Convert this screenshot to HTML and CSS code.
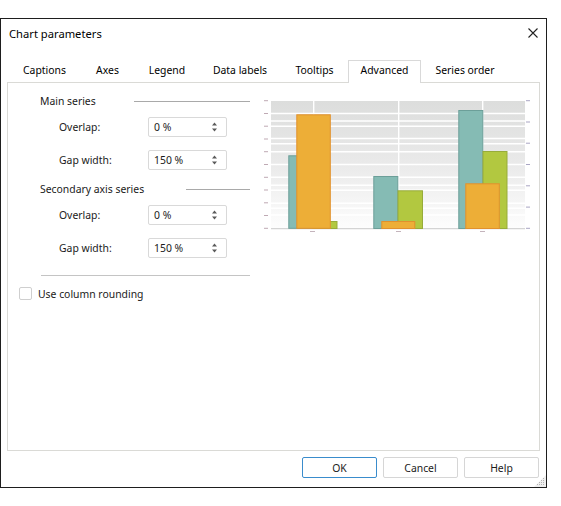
FILE: index.html
```html
<!DOCTYPE html>
<html>
<head>
<meta charset="utf-8">
<title>Chart parameters</title>
<link rel="stylesheet" href="styles.css">
</head>
<body>
<div class="dialog">
  <div class="titlebar">
    <span class="title">Chart parameters</span>
    <svg class="close" width="10" height="10" viewBox="0 0 10 10"><path d="M0.5 0.5L9.5 9.5M9.5 0.5L0.5 9.5" stroke="#222" stroke-width="1.1" fill="none"/></svg>
  </div>
  <div class="tabs">
    <div class="tab t-captions">Captions</div>
    <div class="tab t-axes">Axes</div>
    <div class="tab t-legend">Legend</div>
    <div class="tab t-labels">Data labels</div>
    <div class="tab t-tooltips">Tooltips</div>
    <div class="tab t-advanced active">Advanced</div>
    <div class="tab t-order">Series order</div>
  </div>
  <div class="panel">
    <div class="left">
      <div class="group-head"><span>Main series</span><span class="rule rule-main"></span></div>
      <div class="field first">
        <span class="label">Overlap:</span>
        <div class="spin"><span>0 %</span><svg width="5" height="10" viewBox="0 0 5 10"><path d="M0 3.5L2.5 0.5L5 3.5Z M0 6.5L5 6.5L2.5 9.5Z" fill="#5a5a5a"/></svg></div>
      </div>
      <div class="field">
        <span class="label">Gap width:</span>
        <div class="spin"><span>150 %</span><svg width="5" height="10" viewBox="0 0 5 10"><path d="M0 3.5L2.5 0.5L5 3.5Z M0 6.5L5 6.5L2.5 9.5Z" fill="#5a5a5a"/></svg></div>
      </div>
      <div class="group-head second"><span>Secondary axis series</span><span class="rule rule-sec"></span></div>
      <div class="field first">
        <span class="label">Overlap:</span>
        <div class="spin"><span>0 %</span><svg width="5" height="10" viewBox="0 0 5 10"><path d="M0 3.5L2.5 0.5L5 3.5Z M0 6.5L5 6.5L2.5 9.5Z" fill="#5a5a5a"/></svg></div>
      </div>
      <div class="field">
        <span class="label">Gap width:</span>
        <div class="spin"><span>150 %</span><svg width="5" height="10" viewBox="0 0 5 10"><path d="M0 3.5L2.5 0.5L5 3.5Z M0 6.5L5 6.5L2.5 9.5Z" fill="#5a5a5a"/></svg></div>
      </div>
      <div class="sep"></div>
      <label class="check"><span class="box"></span><span>Use column rounding</span></label>
    </div>
    <svg class="chart" width="272" height="142" viewBox="0 0 272 142">
      <defs>
        <linearGradient id="bg" x1="0" y1="0" x2="0" y2="1">
          <stop offset="0" stop-color="#dcdddc"/>
          <stop offset="0.5" stop-color="#eaeaea"/>
          <stop offset="1" stop-color="#fdfdfd"/>
        </linearGradient>
      </defs>
      <rect x="9" y="6" width="254" height="127" fill="url(#bg)"/>
      <g stroke="#ffffff" stroke-width="1.4">
        <line x1="9" y1="18.5" x2="263" y2="18.5"/>
        <line x1="9" y1="26" x2="263" y2="26"/>
        <line x1="9" y1="31.3" x2="263" y2="31.3"/>
        <line x1="9" y1="43.5" x2="263" y2="43.5"/>
        <line x1="9" y1="48.7" x2="263" y2="48.7"/>
        <line x1="9" y1="56.7" x2="263" y2="56.7"/>
        <line x1="9" y1="69.5" x2="263" y2="69.5"/>
        <line x1="9" y1="82.3" x2="263" y2="82.3"/>
        <line x1="9" y1="90.3" x2="263" y2="90.3"/>
        <line x1="9" y1="95.3" x2="263" y2="95.3"/>
        <line x1="9" y1="108.3" x2="263" y2="108.3"/>
        <line x1="9" y1="113.3" x2="263" y2="113.3"/>
        <line x1="9" y1="120" x2="263" y2="120"/>
        <line x1="51.7" y1="6" x2="51.7" y2="133"/>
        <line x1="136.7" y1="6" x2="136.7" y2="133"/>
        <line x1="220.7" y1="6" x2="220.7" y2="133"/>
      </g>
      <line x1="9" y1="133.6" x2="263" y2="133.6" stroke="#d4d4d4" stroke-width="1.4"/>
      <g fill="#85bbb4" stroke="#6c9f99" stroke-width="1">
        <rect x="26.8" y="60.8" width="24" height="72.5"/>
        <rect x="111.8" y="81.5" width="24" height="52"/>
        <rect x="196.8" y="15.5" width="24" height="118"/>
      </g>
      <g fill="#b2c840" stroke="#97ac3a" stroke-width="1">
        <rect x="51" y="126.5" width="24" height="7"/>
        <rect x="136" y="95.8" width="24.5" height="37.7"/>
        <rect x="221" y="56.5" width="24" height="77"/>
      </g>
      <g fill="#edae37" stroke="#e1912d" stroke-width="1">
        <rect x="34.8" y="19.8" width="33.5" height="113.5"/>
        <rect x="119.8" y="126.5" width="33" height="7"/>
        <rect x="203.8" y="88.8" width="33.5" height="44.7"/>
      </g>
      <g fill="#bfaab4">
        <rect x="2" y="5.2" width="4" height="1"/>
        <rect x="2" y="18" width="4" height="1"/>
        <rect x="2" y="30.7" width="4" height="1"/>
        <rect x="2" y="43.5" width="4" height="1"/>
        <rect x="2" y="56.2" width="4" height="1"/>
        <rect x="2" y="69" width="4" height="1"/>
        <rect x="2" y="81.8" width="4" height="1"/>
        <rect x="2" y="94.5" width="4" height="1"/>
        <rect x="2" y="107.3" width="4" height="1"/>
        <rect x="2" y="120" width="4" height="1"/>
        <rect x="2" y="132.8" width="4" height="1"/>
      </g>
      <g fill="#aaa6c4">
        <rect x="264" y="5.2" width="4" height="1"/>
        <rect x="264" y="26.5" width="4" height="1"/>
        <rect x="264" y="47.7" width="4" height="1"/>
        <rect x="264" y="69" width="4" height="1"/>
        <rect x="264" y="90.3" width="4" height="1"/>
        <rect x="264" y="111.6" width="4" height="1"/>
        <rect x="264" y="132.8" width="4" height="1"/>
      </g>
      <g fill="#c4b4bc">
        <rect x="48" y="136" width="5" height="1"/>
        <rect x="134" y="136" width="5" height="1"/>
        <rect x="218" y="136" width="5" height="1"/>
      </g>
    </svg>
  </div>
  <div class="buttons">
    <button class="btn default">OK</button>
    <button class="btn">Cancel</button>
    <button class="btn">Help</button>
  </div>
  <svg class="grip" width="12" height="12" viewBox="0 0 12 12">
    <path d="M12 0L12 12L0 12Z" fill="#efefef"/>
    <g fill="#b4b4b4">
      <rect x="9" y="3" width="1" height="1"/>
      <rect x="7" y="5" width="1" height="1"/><rect x="9" y="5" width="1" height="1"/>
      <rect x="5" y="7" width="1" height="1"/><rect x="7" y="7" width="1" height="1"/><rect x="9" y="7" width="1" height="1"/>
      <rect x="3" y="9" width="1" height="1"/><rect x="5" y="9" width="1" height="1"/><rect x="7" y="9" width="1" height="1"/><rect x="9" y="9" width="1" height="1"/>
    </g>
  </svg>
</div>
</body>
</html>
```
FILE: styles.css
```css
html, body {
  margin: 0;
  padding: 0;
  background: #ffffff;
}
body {
  font-family: "Noto Sans", "Open Sans", sans-serif;
  font-size: 10.4px;
  color: #1a1a1a;
}
.dialog {
  position: relative;
  box-sizing: border-box;
  margin-top: 18px;
  width: 547px;
  height: 470px;
  border: 1px solid #1e1e1e;
  background: #ffffff;
  display: flex;
  flex-direction: column;
}
.titlebar {
  height: 30px;
  display: flex;
  justify-content: space-between;
  align-items: flex-start;
  padding-left: 8px;
}
.title {
  font-size: 11.2px;
  line-height: 30px;
  color: #000;
}
.close {
  margin-top: 9px;
  margin-right: 8px;
}
.tabs {
  display: flex;
  margin-top: 11px;
  padding-left: 8px;
  height: 22px;
}
.tab {
  box-sizing: border-box;
  height: 22px;
  line-height: 18px;
  text-align: center;
  border: 1px solid transparent;
  border-bottom: 0;
  color: #000;
  white-space: nowrap;
}
.tab.active {
  position: relative;
  z-index: 1;
  height: 23px;
  margin-bottom: -1px;
  border-color: #d9d9d9;
  background: #ffffff;
}
.t-captions { width: 71px; }
.t-axes { width: 55px; }
.t-legend { width: 64px; }
.t-labels { width: 82px; }
.t-tooltips { width: 67px; }
.t-advanced { width: 73px; }
.t-order { width: 88px; }
.panel {
  box-sizing: border-box;
  margin: 0 6px 0 6px;
  height: 369px;
  border: 1px solid #dadad6;
  display: flex;
  align-items: flex-start;
}
.left {
  width: 243px;
  padding-top: 10px;
  display: flex;
  flex-direction: column;
}
.group-head {
  height: 16px;
  line-height: 16px;
  padding-left: 32px;
  display: flex;
  align-items: center;
}
.group-head.second {
  margin-top: 11px;
}
.rule {
  flex: 1;
  height: 1px;
  background: #a9a9a9;
  margin-right: 1px;
}
.rule-main { margin-left: 38px; }
.rule-sec { margin-left: 42px; }
.field {
  display: flex;
  align-items: center;
  padding-left: 51px;
  height: 20px;
  margin-top: 13px;
}
.field.first {
  margin-top: 8px;
}
.label {
  width: 89px;
}
.spin {
  box-sizing: border-box;
  width: 79px;
  height: 20px;
  border: 1px solid #d9d9d9;
  border-radius: 2px;
  display: flex;
  align-items: center;
  justify-content: space-between;
  padding-left: 5px;
  padding-right: 9px;
}
.spin svg {
  display: block;
}
.sep {
  height: 1px;
  background: #c4c4c4;
  margin: 17px 1px 0 33px;
}
.check {
  display: flex;
  align-items: center;
  margin-top: 11px;
  margin-left: 11px;
  height: 13px;
}
.box {
  box-sizing: border-box;
  width: 13px;
  height: 13px;
  border: 1px solid #cfcfcf;
  border-radius: 2px;
  margin-right: 6px;
}
.chart {
  display: block;
  margin-left: 11px;
  margin-top: 12px;
}
.buttons {
  display: flex;
  justify-content: flex-end;
  gap: 6px;
  margin-top: 6px;
  padding-right: 7px;
}
.btn {
  box-sizing: border-box;
  width: 75px;
  height: 21px;
  padding: 0;
  border: 1px solid #d6d6d6;
  border-radius: 2px;
  background: #ffffff;
  font-family: "Noto Sans", "Open Sans", sans-serif;
  font-size: 10.4px;
  color: #1a1a1a;
  line-height: 18px;
}
.btn.default {
  border-color: #3a8ccc;
}
.grip {
  position: absolute;
  right: 0;
  bottom: 0;
}
```
